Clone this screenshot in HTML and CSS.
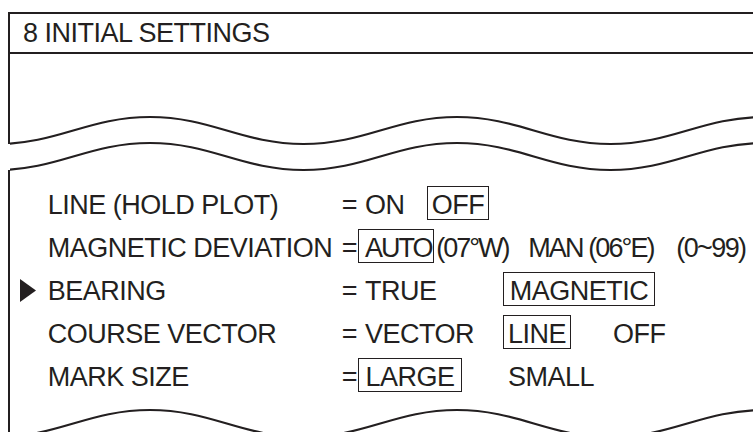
FILE: index.html
```html
<!DOCTYPE html>
<html lang="en">
<head>
    <meta charset="UTF-8">
    <meta name="viewport" content="width=device-width, initial-scale=1.0">
    <title>8 Initial Settings</title>
    <link rel="stylesheet" href="styles.css">
</head>
<body>

    <div class="sheet">

        <!-- Menu title -->
        <section class="panel panel-top">
            <h1 class="title">8 INITIAL SETTINGS</h1>
            <div class="blank"></div>
        </section>

        <!-- Break between the two parts of the screen -->
        <svg class="break" width="743" height="60" viewBox="10 113 743 60">
            <path d="M -3.5 144 C 57.9 144 88.6 117 150 117 S 242.1 144 303.5 144 S 395.6 117 457 117 S 549.1 144 610.5 144 S 702.6 117 764 117"/>
            <path d="M -3.5 170 C 57.9 170 88.6 143 150 143 S 242.1 170 303.5 170 S 395.6 143 457 143 S 549.1 170 610.5 170 S 702.6 143 764 143"/>
        </svg>

        <!-- Settings -->
        <section class="panel panel-body">
            <div class="row">
                <span class="marker"></span>
                <span class="label">LINE (HOLD PLOT)</span>
                <span class="eq">=</span>
                <span class="opt on">ON</span>
                <span class="opt boxed off">OFF</span>
            </div>
            <div class="row">
                <span class="marker"></span>
                <span class="label">MAGNETIC DEVIATION</span>
                <span class="eq tight">=</span>
                <span class="opt boxed auto">AUTO</span>
                <span class="opt auto-value">(07°W)</span>
                <span class="opt man">MAN (06°E)</span>
                <span class="opt range">(0~99)</span>
            </div>
            <div class="row">
                <span class="marker">
                    <svg width="16" height="23" viewBox="0 0 16 23"><path d="M0 0 L16 11.5 L0 23 Z"/></svg>
                </span>
                <span class="label">BEARING</span>
                <span class="eq">=</span>
                <span class="opt first">TRUE</span>
                <span class="opt boxed magnetic">MAGNETIC</span>
            </div>
            <div class="row">
                <span class="marker"></span>
                <span class="label">COURSE VECTOR</span>
                <span class="eq">=</span>
                <span class="opt first">VECTOR</span>
                <span class="opt boxed line">LINE</span>
                <span class="opt after-line">OFF</span>
            </div>
            <div class="row">
                <span class="marker"></span>
                <span class="label">MARK SIZE</span>
                <span class="eq tight">=</span>
                <span class="opt boxed large">LARGE</span>
                <span class="opt small">SMALL</span>
            </div>
        </section>

        <svg class="break break-end" width="743" height="40" viewBox="10 399 743 40">
            <path d="M -3.5 437 C 57.9 437 88.6 410 150 410 S 242.1 437 303.5 437 S 395.6 410 457 410 S 549.1 437 610.5 437 S 702.6 410 764 410"/>
        </svg>

    </div>

</body>
</html>
```

FILE: styles.css
```css
/* Basic Reset */
* {
    margin: 0;
    padding: 0;
    box-sizing: border-box;
}

body {
    font-family: 'Liberation Sans', Arial, sans-serif;
    font-size: 27px;
    letter-spacing: -0.5px;
    background: #fff;
    color: #231f20;
    overflow: hidden;
}

.sheet {
    height: 432px;
    padding: 12px 0 0 8px;
    overflow: hidden;
}

/* Frame */
.panel {
    border-left: 2px solid #231f20;
}

.panel-top {
    border-top: 2px solid #231f20;
}

.title {
    font-size: 27px;
    font-weight: normal;
    line-height: 37px;
    padding: 1px 0 0 13px;
    border-bottom: 2px solid #231f20;
}

.blank {
    height: 90px;
}

.break {
    display: block;
    margin: -31px 0 0 2px;
}

.break path {
    fill: none;
    stroke: #231f20;
    stroke-width: 2.2;
}

.break-end {
    margin-top: -33px;
}

.panel-body {
    margin-top: -3px;
    padding: 14px 0 33px 10px;
}

/* Setting rows */
.row {
    display: flex;
    align-items: baseline;
    height: 43px;
    line-height: 43px;
    white-space: nowrap;
}

.marker {
    width: 27.7px;
    flex-shrink: 0;
    align-self: center;
    display: flex;
    margin-top: -3px;
}

.marker path {
    fill: #231f20;
}

.label {
    width: 294px;
    flex-shrink: 0;
}

.eq {
    width: 23.3px;
    flex-shrink: 0;
}

.eq.tight {
    width: 16.3px;
}

.opt {
    flex-shrink: 0;
}

.boxed {
    border: 1px solid #231f20;
    line-height: 27px;
    padding-top: 5px;
    height: 34px;
    text-align: center;
}

.on { width: 62px; }
.off { width: 62px; }

/* the deviation line is set tighter */
.auto { width: 76px; text-align: left; padding-left: 6px; letter-spacing: -2px; }
.auto-value { width: 94.3px; padding-left: 2.3px; letter-spacing: -2px; }
.man { width: 148px; letter-spacing: -1.9px; }
.range { letter-spacing: -1.6px; }

.first { width: 138px; }
.magnetic { width: 152px; }
.line { width: 68px; }
.after-line { padding-left: 42px; }
.large { width: 104px; }
.small { padding-left: 46px; }
```
